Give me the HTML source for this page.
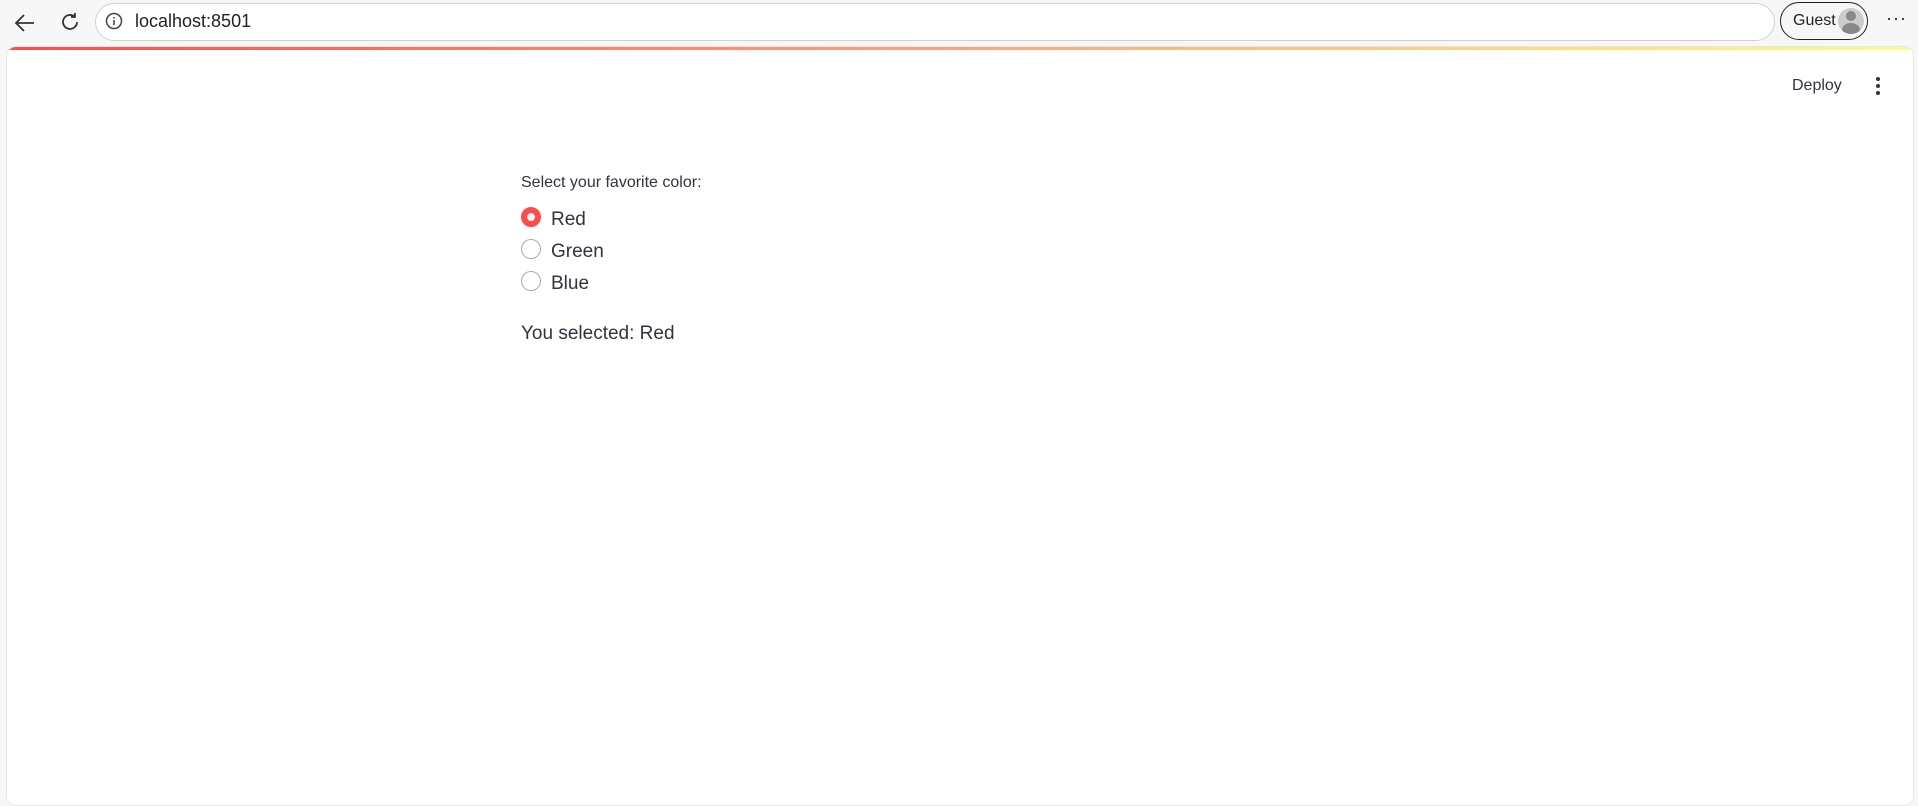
<!DOCTYPE html>
<html><head><style>
body{margin:0;width:1918px;height:800px;background:#f7f7f7;font-family:"Liberation Sans",sans-serif;position:relative;overflow:hidden;color:#31333f}
.abs{position:absolute}
.addr{left:95px;top:3px;width:1678px;height:36px;border:1px solid #d0d0d0;border-radius:20px;background:#fff}
.page{left:6px;top:46px;width:1908px;height:760px;background:#fff;border-radius:10px;overflow:hidden;border:1px solid #e6e6e6;box-sizing:border-box}
.grad{left:0;top:0;width:100%;height:3px;background:linear-gradient(90deg,#ff4b4b,#ffa47a 50%,#fffd80)}
.radio{width:16px;height:16px;border-radius:50%;border:1px solid #aaa;background:#fff}
.on{width:8px;height:8px;border:6px solid #ff4b4b;background:#f0f2f6}
.t{font-size:19px}
</style></head><body>
<svg class="abs" style="left:12px;top:10px" width="26" height="26" viewBox="0 0 26 26"><path d="M22 13H4M12 5l-8 8 8 8" fill="none" stroke="#333" stroke-width="1.8"/></svg>
<svg class="abs" style="left:58px;top:10px" width="24" height="24" viewBox="0 0 24 24"><path d="M19 12a7 7 0 1 1-2.5-5.4M17 3v4h-4" fill="none" stroke="#333" stroke-width="1.8"/></svg>
<div class="abs addr"></div>
<svg class="abs" style="left:105px;top:12px" width="18" height="18" viewBox="0 0 18 18"><circle cx="9" cy="9" r="7.5" fill="none" stroke="#444" stroke-width="1.5"/><path d="M9 8v5M9 5v1.5" stroke="#444" stroke-width="1.6"/></svg>
<div class="abs" style="left:135px;top:11px;font-size:18px;color:#222">localhost:8501</div>
<div class="abs" style="left:1780px;top:2px;width:88px;height:38px;border:1.5px solid #222;border-radius:20px;box-sizing:border-box"></div>
<div class="abs" style="left:1793px;top:12px;font-size:16px;color:#222">Guest</div>
<div class="abs" style="left:1838px;top:8px;width:26px;height:26px;border-radius:50%;background:#ccc;overflow:hidden"><div class="abs" style="left:4px;top:15px;width:18px;height:14px;border-radius:50%;background:#888"></div><div class="abs" style="left:8px;top:3px;width:10px;height:10px;border-radius:50%;background:#888"></div></div>
<div class="abs" style="left:1886px;top:8px;font-size:18px;color:#222;letter-spacing:1px">···</div>
<div class="abs page">
<div class="abs grad"></div>
<div class="abs" style="left:1785px;top:30px;font-size:16px">Deploy</div>
<div class="abs" style="left:1869px;top:30px;width:4px"><div style="width:4px;height:4px;border-radius:50%;background:#31333f;margin-bottom:3px"></div><div style="width:4px;height:4px;border-radius:50%;background:#31333f;margin-bottom:3px"></div><div style="width:4px;height:4px;border-radius:50%;background:#31333f"></div></div>
<div class="abs" style="left:514px;top:127px;font-size:16px">Select your favorite color:</div>
<div class="abs radio on" style="left:514px;top:160px"></div>
<div class="abs t" style="left:544px;top:162px">Red</div>
<div class="abs radio" style="left:514px;top:192px;width:18px;height:18px"></div>
<div class="abs t" style="left:544px;top:194px">Green</div>
<div class="abs radio" style="left:514px;top:224px;width:18px;height:18px"></div>
<div class="abs t" style="left:544px;top:226px">Blue</div>
<div class="abs t" style="left:514px;top:276px">You selected: Red</div>
</div>
</body></html>
